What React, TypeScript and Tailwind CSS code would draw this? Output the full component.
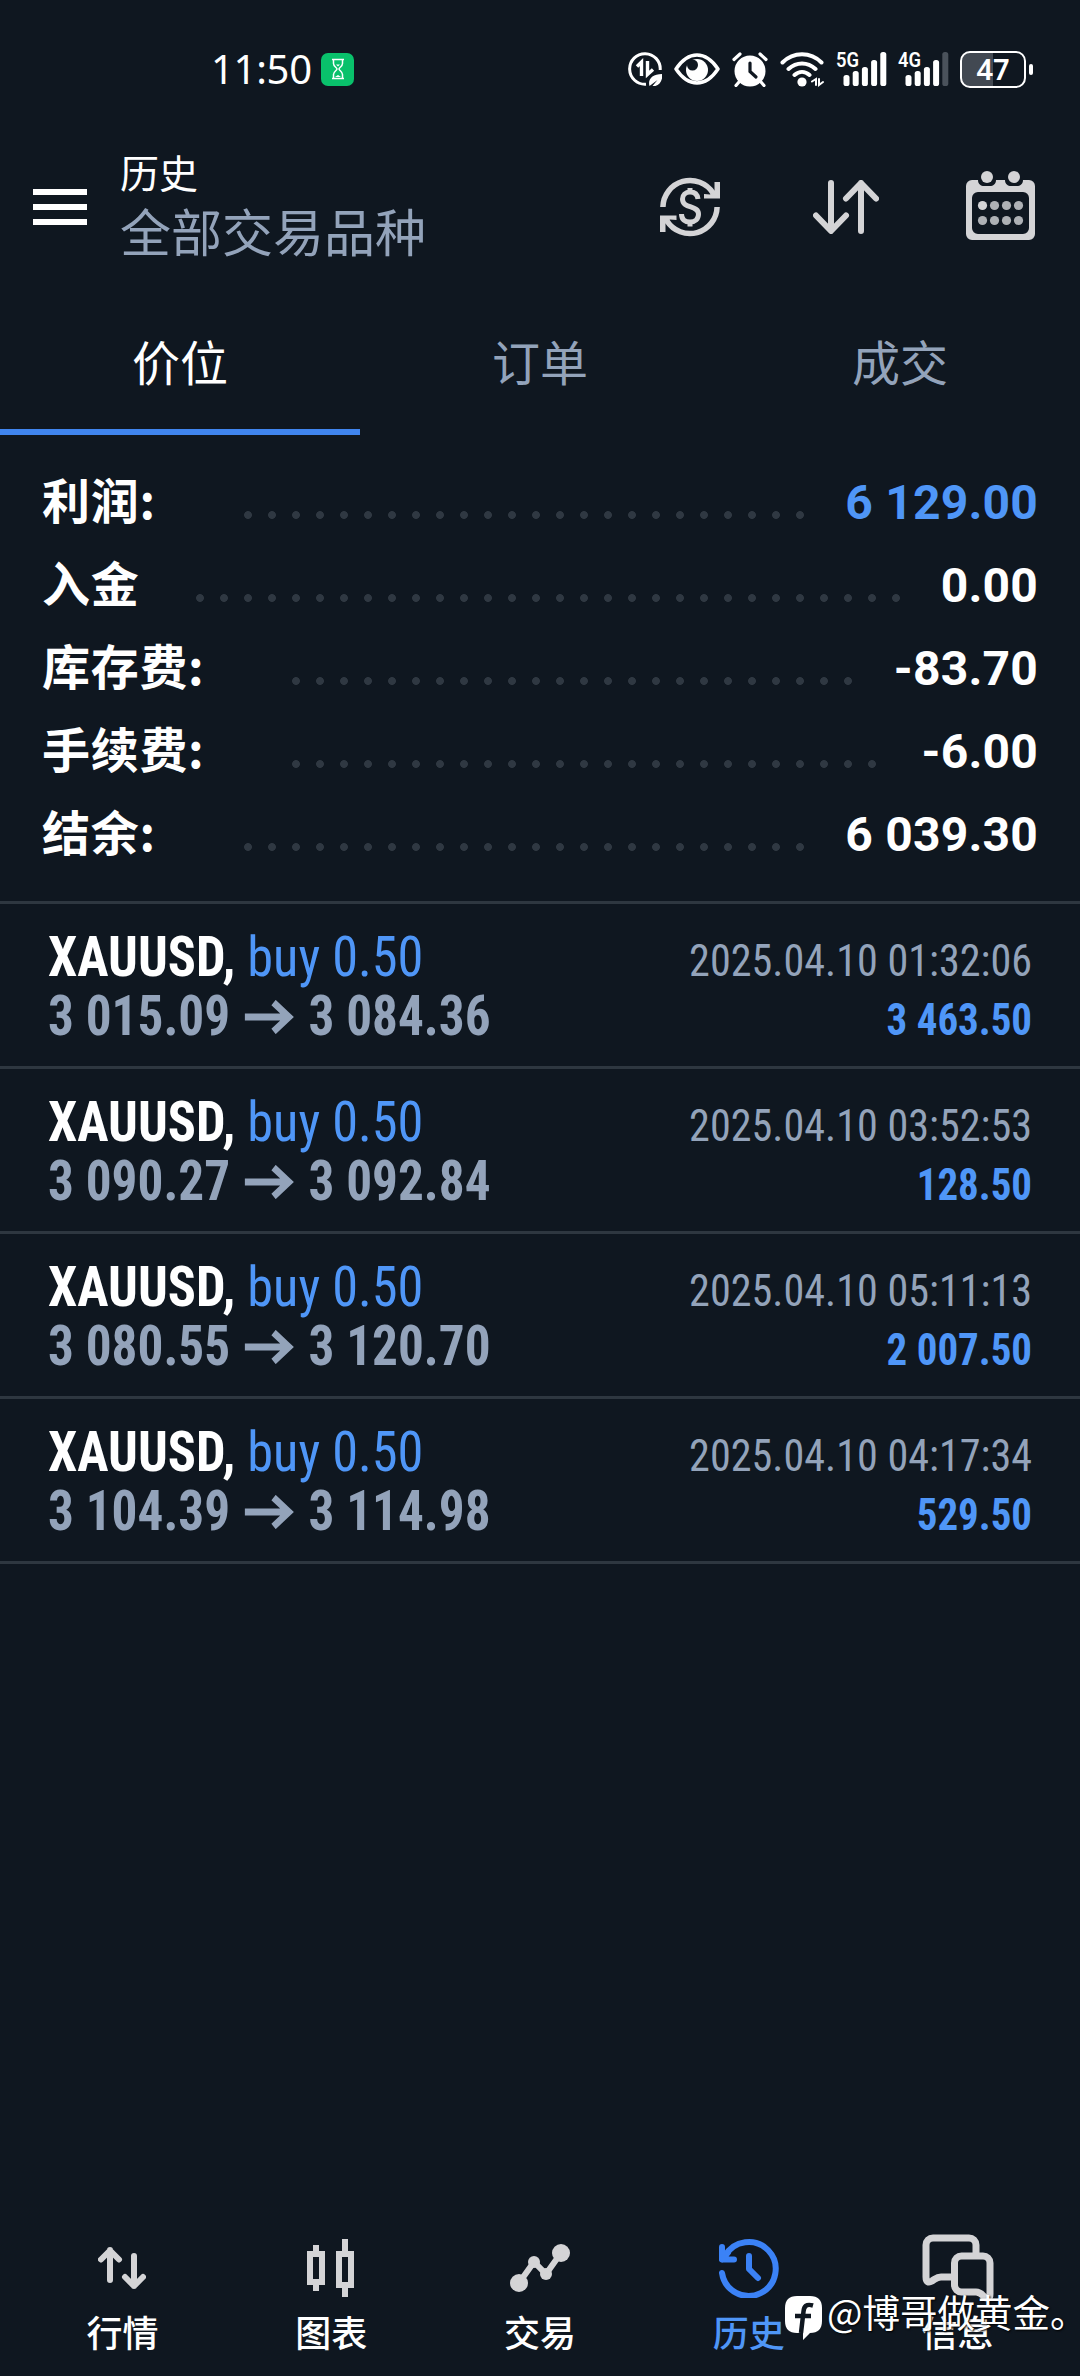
import React from 'react';

interface SummaryItem {
  label: string;
  value: string;
  start: number;
  dots: number;
  profit?: boolean;
}

interface Deal {
  open: string;
  close: string;
  time: string;
  profit: string;
}

const summary: SummaryItem[] = [
  { label: '利润:', value: '6 129.00', start: 236, dots: 24, profit: true },
  { label: '入金', value: '0.00', start: 188, dots: 30 },
  { label: '库存费:', value: '-83.70', start: 284, dots: 24 },
  { label: '手续费:', value: '-6.00', start: 284, dots: 25 },
  { label: '结余:', value: '6 039.30', start: 236, dots: 24 },
];

const deals: Deal[] = [
  { open: '3 015.09', close: '3 084.36', time: '2025.04.10 01:32:06', profit: '3 463.50' },
  { open: '3 090.27', close: '3 092.84', time: '2025.04.10 03:52:53', profit: '128.50' },
  { open: '3 080.55', close: '3 120.70', time: '2025.04.10 05:11:13', profit: '2 007.50' },
  { open: '3 104.39', close: '3 114.98', time: '2025.04.10 04:17:34', profit: '529.50' },
];

function Signal({ label, weak }: { label: string; weak?: boolean }) {
  const tops = [23, 19, 15, 8, 0];
  return (
    <svg className="overflow-visible" width="51" height="35" viewBox="0 0 51 35" fill="#fff">
      <text x="0" y="15" fontSize="20" fontWeight="600" fontFamily="Roboto, sans-serif" textLength="23" lengthAdjust="spacingAndGlyphs">
        {label}
      </text>
      {tops.map((top, i) => (
        <rect key={top} x={7.5 + i * 9.2} y={top} width="6" height={34 - top} rx="2.6" fill={weak && i === 4 ? '#4a525b' : '#fff'} />
      ))}
    </svg>
  );
}

function StatusBar() {
  return (
    <div className="flex h-[138px] items-center pl-[211px]">
      <span className="w-[110px] font-['Noto_Sans','Open_Sans',sans-serif] text-[40px] leading-[60px] tracking-[-0.3px] whitespace-nowrap">11:50</span>
      <span className="flex size-[33px] items-center justify-center rounded-[7px] bg-[#09c16b]">
        <svg width="14" height="22" viewBox="0 0 14 22" fill="none" stroke="#fff" strokeWidth="1.5">
          <path d="M1 1.5h12M1 20.5h12M2.5 2v3.5c0 3 3.5 4 3.5 5.5s-3.5 2.5-3.5 5.5V20M11.5 2v3.5c0 3-3.5 4-3.5 5.5s3.5 2.5 3.5 5.5V20" />
          <path d="M5 6.5h4L7 8.5zM4 19l3-2 3 2z" fill="#fff" stroke="none" />
        </svg>
      </span>
      <div className="ml-[274px] flex h-[37px] items-center">
        {/* データ節約 */}
        <svg width="34" height="34" viewBox="0 0 34 34" fill="none" stroke="#fff" strokeWidth="3">
          <path d="M32.2 18A15.3 15.3 0 1 0 18 32.2" />
          <path d="M9 14.5l4.5-4.5v14M19.5 9v13.5l5.500-5" strokeWidth="3.4" />
          <path d="M21.5 34c-2-7 3-12 13-12 0 8-4 13-10 12l5-6z" fill="#fff" stroke="none" />
        </svg>
        {/* アイコンフォーカス */}
        <svg className="ml-[12px]" width="46" height="32" viewBox="0 0 46 32">
          <path d="M2 16C8 7 15 2 23 2s15 5 21 14c-6 9-13 14-21 14S8 25 2 16z" fill="none" stroke="#fff" strokeWidth="3.5" strokeLinejoin="round" />
          <circle cx="23" cy="17" r="11" fill="#fff" />
          <circle cx="18.500" cy="12" r="5.500" fill="#0f1720" />
        </svg>
        {/* アラーム */}
        <svg className="ml-[12px]" width="36" height="35" viewBox="0 0 36 35" fill="none" stroke="#fff" strokeWidth="3.2" strokeLinecap="round">
          <circle cx="18" cy="19" r="15.5" fill="#fff" stroke="none" />
          <path d="M2 7.5l6-5.5M34 7.5L28 2M7 30l-3 3.5M29 30l3 3.5" />
          <path d="M18 11v8.5l6 5.5" stroke="#0f1720" />
        </svg>
        {/* Wi-Fi */}
        <svg className="ml-[12px]" width="44" height="35" viewBox="0 0 44 35" fill="none" stroke="#fff" strokeWidth="4" strokeLinecap="round">
          <path d="M2.5 10.5c11-11 28-11 39 0M8.5 17c8-7.5 19-7.5 27 0M14.5 23c4.5-4 10.5-4 15 0" />
          <circle cx="22" cy="30" r="4.6" fill="#fff" stroke="none" />
          <path d="M32 29.5l4-2.5v6M39 27v6l4-3" strokeWidth="2" />
        </svg>
        <span className="ml-[12px] flex">
          <Signal label="5G" />
        </span>
        <span className="ml-[11px] flex">
          <Signal label="4G" weak />
        </span>
        <div className="ml-[11px] flex items-center gap-[2.5px]">
          <span className="flex h-[37px] w-[66px] items-center justify-center rounded-[10px] border-[2.5px] border-white bg-linear-to-r from-[#424952] from-50% to-transparent to-50% font-['Noto_Sans',sans-serif] text-[29px] leading-[34px] font-semibold">
            47
          </span>
          <span className="h-[11px] w-[4px] rounded-[2px] bg-white" />
        </div>
      </div>
    </div>
  );
}

function Header() {
  return (
    <header className="flex h-[138px] items-center pr-[45px] pl-[33px]">
      <button className="flex w-[54px] flex-col gap-[9px]">
        <span className="h-[6px] bg-white" />
        <span className="h-[6px] bg-white" />
        <span className="h-[6px] bg-white" />
      </button>
      <div className="ml-[33px] flex-1 pb-[5px]">
        <div className="text-[39px] leading-[52px]">历史</div>
        <div className="text-[51px] leading-[67px] text-[#93a3ba]">全部交易品种</div>
      </div>
      <svg width="60" height="60" viewBox="0 0 60 60" fill="none" stroke="#d4d4d6" strokeWidth="5.5">
        <path d="M2.9 30A27.2 27.2 0 0 1 53 16M57.1 30A27.2 27.2 0 0 1 7 44" />
        <path d="M60 5v16.5H44V17l6 .5 4.5-4V5zM0 55V38.5h16.5V43l-6.5-.5-4.5 4V55z" fill="#d4d4d6" stroke="none" />
        <path d="M38 22c-.5-4.5-3.5-7-8-7s-7.5 3-7.5 7c0 10 16 6 16 15 0 5-3.5 8-8.5 8s-8.5-2.5-8.5-8M30 11v5M30 44v5.5" strokeWidth="5" />
      </svg>
      <svg className="ml-[93px]" width="66" height="54" viewBox="0 0 66 54" fill="none" stroke="#d4d4d6" strokeWidth="6" strokeLinecap="round" strokeLinejoin="round">
        <path d="M18 3v47.5M3 35.5l15 15.5 15-15.5M48 51V3M33 18.5L48 3l15 15.5" />
      </svg>
      <svg className="mb-[3px] ml-[87px]" width="69" height="69" viewBox="0 0 69 69">
        <path fillRule="evenodd" fill="#d4d4d6" d="M6 9h6c0 4 3 6 6 6h6c3 0 6-2 6-6h9c0 4 3 6 6 6h6c3 0 6-2 6-6h6a6 6 0 0 1 6 6v48a6 6 0 0 1-6 6H6a6 6 0 0 1-6-6V15a6 6 0 0 1 6-6zM12 21a6 6 0 0 0-6 6v30a6 6 0 0 0 6 6h45a6 6 0 0 0 6-6V27a6 6 0 0 0-6-6z" />
        <circle cx="21" cy="6" r="6" fill="#d4d4d6" />
        <circle cx="48" cy="6" r="6" fill="#d4d4d6" />
        {[34.5, 49.5].map((cy) =>
          [16.5, 28.5, 40.5, 52.5].map((cx) => (
            <circle key={`${cx}-${cy}`} cx={cx} cy={cy} r="4.6" fill={cx === 16.5 && cy === 34.5 ? '#d4d4d6' : '#aeb1b5'} />
          ))
        )}
      </svg>
    </header>
  );
}

function Tabs() {
  return (
    <nav className="mt-[15px] grid h-[144px] grid-cols-3 text-center text-[48px] text-[#93a3ba]">
      <span className="border-b-[6px] border-[#4085ee] leading-[138px] text-white">价位</span>
      <span className="leading-[138px]">订单</span>
      <span className="leading-[138px]">成交</span>
    </nav>
  );
}

function SummaryRow({ item }: { item: SummaryItem }) {
  return (
    <div className="flex h-[83px] items-baseline pr-[42px] pl-[42px] text-[48px] leading-[83px] font-bold">
      <span className="shrink-0 tracking-[0.7px] whitespace-nowrap" style={{ width: item.start - 42 }}>
        {item.label}
      </span>
      <span
        className="mb-[2px] h-[8px] shrink-0 bg-[radial-gradient(circle_at_center,#2f3842_3.5px,transparent_4.3px)] bg-[length:24px_8px]"
        style={{ width: item.dots * 24 }}
      />
      <span className={`ml-auto font-['Roboto',sans-serif] tracking-[0.2px] ${item.profit ? 'text-[#4f96f7]' : ''}`}>{item.value}</span>
    </div>
  );
}

function DealRow({ deal }: { deal: Deal }) {
  return (
    <div className="flex h-[165px] items-baseline justify-between border-b-[3px] border-[#2e3740] pt-[24px] pr-[48px] pl-[48px] font-['Roboto_Condensed','Roboto',sans-serif] font-stretch-condensed">
      <div className="text-[55px] leading-[59px] font-bold whitespace-nowrap">
        <div className="origin-left scale-x-[0.951]">
          XAUUSD, <span className="font-normal text-[#4f96f7]">buy 0.50</span>
        </div>
        <div className="flex origin-left scale-x-[0.932] items-center text-[#93a3ba]">
          {deal.open}
          <svg className="mr-[15px] ml-[16px]" width="53" height="34" viewBox="0 0 53 34" fill="none" stroke="#93a3ba" strokeWidth="7">
            <path d="M0 17h47M31 2.5L47.5 17 31 31.5" />
          </svg>
          {deal.close}
        </div>
      </div>
      <div className="text-right text-[45px] leading-[59px] whitespace-nowrap">
        <div className="origin-right scale-x-[0.937] text-[#93a3ba]">{deal.time}</div>
        <div className="origin-right scale-x-[0.91] font-bold text-[#4f96f7]">{deal.profit}</div>
      </div>
    </div>
  );
}

function NavItem({ label, active, children }: { label: string; active?: boolean; children: React.ReactNode }) {
  return (
    <div className={`flex flex-1 flex-col items-center ${active ? 'text-[#4f96f7]' : 'text-white'}`}>
      <div className="flex h-[72px] items-center">{children}</div>
      <span className="font-['KaiTi','Noto_Sans_CJK_SC',sans-serif] text-[36px] leading-[54px] font-medium">{label}</span>
    </div>
  );
}

function BottomNav() {
  return (
    <nav className="flex h-[176px] px-[18px] pt-[32px]">
      <NavItem label="行情">
        <svg width="48" height="42" viewBox="0 0 48 42" fill="none" stroke="#d4d4d6" strokeWidth="6" strokeLinecap="round" strokeLinejoin="round">
          <path d="M12 33V3M3 12.5L12 3.5l9 9M36 9v30M27 30l9 9 9-9" />
        </svg>
      </NavItem>
      <NavItem label="图表">
        <svg width="48" height="58" viewBox="0 0 48 58" fill="none" stroke="#d4d4d6" strokeWidth="6">
          <path d="M3 15h12v28H3zM9 6v6M9 46v6M32 15h12v31H32zM38 0v12M38 49v9" />
        </svg>
      </NavItem>
      <NavItem label="交易">
        <svg width="60" height="48" viewBox="0 0 60 48" fill="#d4d4d6">
          <path d="M9 39l15-21 12 12L51 9" fill="none" stroke="#d4d4d6" strokeWidth="6" />
          <circle cx="9" cy="39" r="9" />
          <circle cx="24" cy="18" r="6" />
          <circle cx="36" cy="30" r="6" />
          <circle cx="51" cy="9" r="9" />
        </svg>
      </NavItem>
      <NavItem label="历史" active>
        <svg width="60" height="60" viewBox="0 0 60 60" fill="none" stroke="#3b82f6" strokeWidth="6" strokeLinecap="round" strokeLinejoin="round">
          <path d="M3 35A27 27 0 1 0 6 18M30 18v13l9 9" />
          <path d="M3 9v12.5h12M3 21.5l6-7" />
        </svg>
      </NavItem>
      <NavItem label="信息">
        <svg width="72" height="68" viewBox="0 0 72 68" fill="none" stroke="#d4d4d6" strokeWidth="7" strokeLinejoin="round">
          <path d="M54 20V11a7 7 0 0 0-7-7H11a7 7 0 0 0-7 7v32c0 5 2.500 6 6 4 4-2.500 5-4 9-4h12" />
          <path d="M39.500 22H61a7 7 0 0 1 7 7v31c0 5-3 6-6 2.500-3-3-4-4.500-8-4.500H39.500a7 7 0 0 1-7-7V29a7 7 0 0 1 7-7z" />
        </svg>
      </NavItem>
    </nav>
  );
}

function Watermark() {
  return (
    <div className="absolute right-0 bottom-[37px] flex h-[56px] w-[295px] items-center">
      <svg width="37" height="44" viewBox="0 0 37 44" className="mt-[14px] shrink-0">
        <path d="M12 0h13c8 0 12 4 12 12v13c0 8-4 12-12 12l-7 7v-7h-6C4 37 0 33 0 25V12C0 4 4 0 12 0z" fill="#fff" />
        <path d="M28 9.5c-7-2-9 1-9.500 6L16 37M10 20h16" fill="none" stroke="#0f1720" strokeWidth="4.5" />
      </svg>
      <span className="ml-[5px] text-[37.5px] leading-[56px] whitespace-nowrap text-shadow-[1px_1px_2px_#000]">@博哥做黄金。</span>
    </div>
  );
}

export default function App() {
  return (
    <div className="relative flex h-[2376px] w-[1080px] flex-col overflow-hidden bg-[#0f1720] font-['Noto_Sans_CJK_SC',sans-serif] text-white">
      <StatusBar />
      <Header />
      <Tabs />

      {/* 集計 */}
      <section className="h-[469px] border-b-[3px] border-[#2e3740] pt-[22px]">
        {summary.map((item) => (
          <SummaryRow key={item.label} item={item} />
        ))}
      </section>

      {/* 取引履歴 */}
      <main className="flex-1">
        {deals.map((deal) => (
          <DealRow key={deal.time} deal={deal} />
        ))}
      </main>

      <BottomNav />
      <Watermark />
    </div>
  );
}
